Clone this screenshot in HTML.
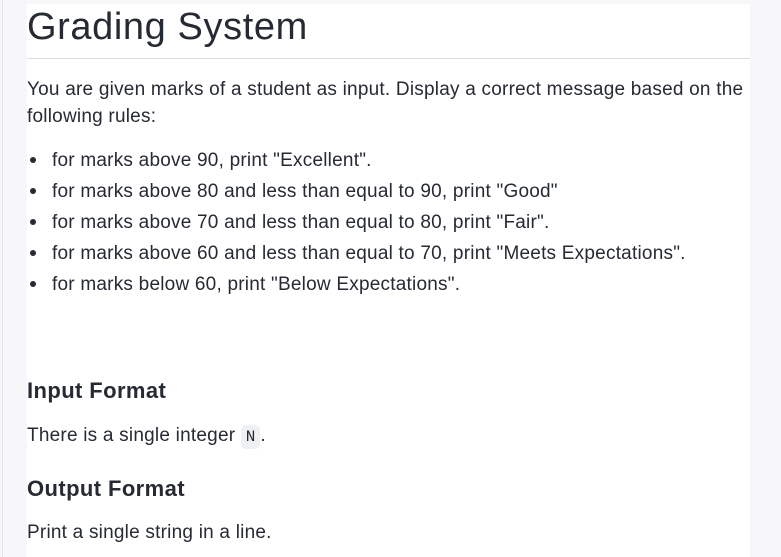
<!DOCTYPE html>
<html><head><meta charset="utf-8"><style>
html,body{margin:0;padding:0;width:781px;height:557px;overflow:hidden;background:#f7f7f9;}
body{font-family:"Liberation Sans",sans-serif;color:#262a33;position:relative;}
.edge{position:absolute;left:2px;top:0;width:1px;height:557px;background:#e3e4e8;}
.main{position:absolute;left:27px;top:4px;width:723px;height:553px;background:#fff;}
.t{position:absolute;left:0;white-space:nowrap;}
h1{position:absolute;left:0;top:2px;margin:0;font-size:38px;font-weight:normal;letter-spacing:0.6px;color:#262a33;}
.rule{position:absolute;left:0;top:54px;width:723px;height:1px;background:#dcdde1;}
.p{font-size:19px;letter-spacing:0.22px;}
.h{font-size:22px;font-weight:bold;letter-spacing:0.4px;}
.dot{position:absolute;left:3px;width:6px;height:6px;border-radius:50%;background:#262a33;}
code{font-family:"Liberation Mono",monospace;font-size:16px;background:#eff0f2;border-radius:5px;padding:3px 5px;letter-spacing:0;}
</style></head><body>
<div class="edge"></div>
<div class="main">
<h1>Grading System</h1>
<div class="rule"></div>
<div class="t p" style="top:75px">You are given marks of a student as input. Display a correct message based on the</div>
<div class="t p" style="top:102px">following rules:</div>
<div class="dot" style="top:153px"></div><div class="t p" style="left:25px;top:146px">for marks above 90, print "Excellent".</div>
<div class="dot" style="top:184px"></div><div class="t p" style="left:25px;top:177px">for marks above 80 and less than equal to 90, print "Good"</div>
<div class="dot" style="top:215px"></div><div class="t p" style="left:25px;top:208px">for marks above 70 and less than equal to 80, print "Fair".</div>
<div class="dot" style="top:246px"></div><div class="t p" style="left:25px;top:239px">for marks above 60 and less than equal to 70, print "Meets Expectations".</div>
<div class="dot" style="top:277px"></div><div class="t p" style="left:25px;top:270px">for marks below 60, print "Below Expectations".</div>
<div class="t h" style="top:374px">Input Format</div>
<div class="t p" style="top:421px">There is a single integer <code>N</code>.</div>
<div class="t h" style="top:472px">Output Format</div>
<div class="t p" style="top:518px">Print a single string in a line.</div>
</div>
</body></html>
